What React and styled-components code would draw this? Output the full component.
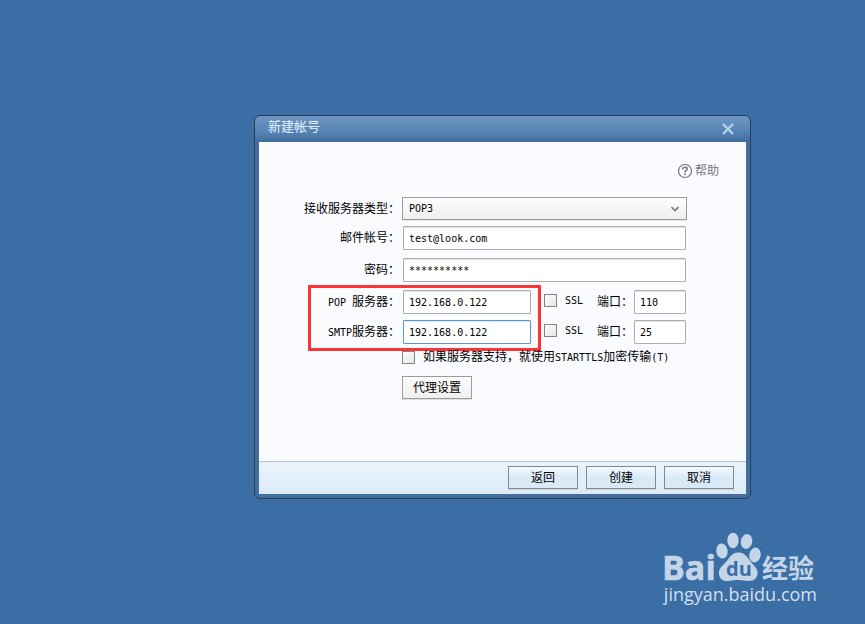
import React, { useState } from 'react';
import styled, { createGlobalStyle } from 'styled-components';

const GlobalStyle = createGlobalStyle`
  * {
    box-sizing: border-box;
  }
  body {
    margin: 0;
    background: #3b6ea5;
    color: #000;
    font-family: "Liberation Sans", "Noto Sans CJK SC", sans-serif;
    font-size: 12px;
  }
  button, input, select {
    margin: 0;
    font-family: inherit;
    font-size: inherit;
    color: inherit;
  }
`;

const Desktop = styled.div`
  min-height: 100vh;
  display: flex;
  flex-direction: column;
  justify-content: space-between;
  padding: 115px 48px 18px 254px;
`;

const Dialog = styled.section`
  margin-right: 66px;
  padding: 0 4px 4px;
  border: 1px solid #263f58;
  border-radius: 6px;
  background: linear-gradient(#7096c3, #5986b4 14px, #426e9e 26px);
`;

const TitleBar = styled.header`
  height: 26px;
  display: flex;
  align-items: center;
  justify-content: space-between;
  padding: 0 10px 0 9px;
`;

const Title = styled.h1`
  margin: 0;
  padding-bottom: 4px;
  color: #e3f1ff;
  font-size: 13px;
  font-weight: 400;
  line-height: 20px;
`;

const CloseButton = styled.button`
  display: flex;
  padding: 2px;
  border: 0;
  background: none;
  color: #b8d0e8;
`;

const Content = styled.div`
  display: flex;
  flex-direction: column;
  min-height: 319px;
  padding-top: 19px;
  background: #f9fbff;
`;

const HelpLink = styled.a`
  align-self: flex-end;
  display: flex;
  align-items: center;
  gap: 2px;
  height: 20px;
  margin: 0 27px 16px 0;
  color: #77797d;
  line-height: 18px;
  text-decoration: none;
`;

const Form = styled.form`
  padding-right: 60px;
`;

const Row = styled.div`
  display: flex;
  align-items: center;
  margin-bottom: ${props => props.$gap || 0}px;
`;

const Label = styled.label`
  flex: none;
  width: ${props => props.$width || 144}px;
  padding-right: ${props => (props.$tight ? 1 : 3)}px;
  line-height: 16px;
  text-align: right;
  white-space: nowrap;
`;

const Latin = styled.span`
  font-family: "DejaVu Sans Mono", monospace;
  font-size: 10px;
  white-space: pre;
`;

const TextInput = styled.input`
  flex: ${props => (props.$width ? 'none' : '1')};
  width: ${props => (props.$width ? `${props.$width}px` : 'auto')};
  min-width: 0;
  height: 24px;
  padding: 1px 6px 0 5px;
  border: 1px solid ${props => (props.$active ? '#5797da' : '#adadad')};
  border-radius: 1px;
  outline: none;
  background: #fff;
  box-shadow: inset 0 1px 0 ${props => (props.$active ? '#dce9f7' : '#e3e5e8')};
  font-family: "DejaVu Sans Mono", monospace;
  font-size: 10px;
`;

const SelectBox = styled.div`
  flex: 1;
  display: grid;
  align-items: center;
  margin: 0 -1px;

  > * {
    grid-area: 1 / 1;
  }

  svg {
    justify-self: end;
    margin-right: 8px;
    pointer-events: none;
  }
`;

const Select = styled.select`
  appearance: none;
  width: 100%;
  height: 23px;
  padding: 0 6px;
  border: 1px solid #9c9c9c;
  border-radius: 0;
  outline: none;
  background: linear-gradient(#fdfdfd, #efefef);
  box-shadow: 0 1px 0 #e4e6eb;
  font-family: "DejaVu Sans Mono", monospace;
  font-size: 10px;
`;

const ServerGroup = styled.div`
  display: flex;
`;

const Highlight = styled.div`
  flex: 1;
  min-width: 0;
  display: flex;
  flex-direction: column;
  gap: 6px;
  margin-left: 49px;
  padding: 2px 7px 4px 0;
  border: 3px solid #fb3537;
`;

const Ports = styled.div`
  flex: none;
  display: flex;
  flex-direction: column;
  gap: 6px;
  padding: 5px 0 0 3px;
`;

const Checkbox = styled.input`
  appearance: none;
  flex: none;
  width: 13px;
  height: 13px;
  border: 1px solid #858585;
  outline: none;
  background: linear-gradient(135deg, #fdfdfd, #e6e6e6);

  &:checked {
    background: #5797da;
  }
`;

const CheckLabel = styled.label`
  display: flex;
  align-items: center;
  gap: 8px;
  line-height: 13px;
  white-space: nowrap;
`;

const PortCheck = styled(CheckLabel)`
  padding-bottom: 3px;
`;

const StartTls = styled.div`
  padding: 0 0 12px 143px;
`;

const Button = styled.button`
  display: block;
  width: 70px;
  height: 23px;
  padding: 0;
  border: 1px solid ${props => (props.$blue ? '#7c8c9d' : '#9c9c9c')};
  background: ${props => (props.$blue ? 'linear-gradient(#f3f9ff, #d9e9f7 55%, #d9eaf7)' : 'linear-gradient(#fcfcfc, #f0f0f0)')};
  box-shadow: 0 1px 0 ${props => (props.$blue ? '#d6d3cc' : '#dedfe3')};
  line-height: 20px;
`;

const ProxyRow = styled.div`
  padding-left: 143px;
`;

const Footer = styled.footer`
  display: flex;
  justify-content: flex-end;
  gap: 8px;
  padding: 4px 12px 5px;
  border-top: 1px solid #b7c4d0;
  background: linear-gradient(#e9f3fb, #dcebf7);
`;

const Watermark = styled.div`
  align-self: flex-end;
  display: flex;
  flex-direction: column;
  color: #c5d5e8;

  svg {
    overflow: visible;
  }
`;

const Site = styled.div`
  font-family: "Open Sans", sans-serif;
  font-size: 18px;
  line-height: 24px;
  text-align: right;
  color: #d3dfed;
`;

function CloseIcon() {
  return (
    <svg width="12" height="12" viewBox="0 0 12 12">
      <path d="M1 1L11 11M11 1L1 11" stroke="currentColor" strokeWidth="2.2" fill="none" />
    </svg>
  );
}

function HelpIcon() {
  return (
    <svg width="15" height="15" viewBox="0 0 15 15" fill="none" stroke="currentColor">
      <circle cx="7" cy="7" r="6.5" strokeWidth="1.2" />
      <path d="M4.700 5.500V5Q4.900 3.200 7 3.200Q9.200 3.200 9.200 4.800Q9.200 5.800 8 6.500Q7 7 7 8.500" strokeWidth="1.6" />
      <path d="M7 9.500V11.100" strokeWidth="1.8" />
    </svg>
  );
}

function Logo() {
  return (
    <svg width="153" height="50" viewBox="0 0 153 50" fill="currentColor">
      <text x="-2" y="48" fontFamily="Open Sans, sans-serif" fontWeight="700" fontSize="34" stroke="currentColor" strokeWidth="0.6">Bai</text>
      <ellipse cx="58" cy="19" rx="5.700" ry="7.500" transform="rotate(-8 58 19)" />
      <ellipse cx="69" cy="8.500" rx="5.700" ry="7.700" />
      <ellipse cx="82.500" cy="9.500" rx="5.700" ry="7.500" transform="rotate(12 82.500 9.500)" />
      <ellipse cx="91" cy="23" rx="5.700" ry="7.500" transform="rotate(12 91 23)" />
      <path d="M74.500 20.500C67 20.500 65 27 61 31C57 35 54.500 37 55 42C55.500 47 59 49.500 64 49C68 48.500 71 48 75 48C79 48 81 49 85 49C90 49 93.500 46 93.500 41C93.500 36 90 34 87 30C83 25 81 20.500 74.500 20.500Z" />
      <text x="62" y="44" fontFamily="Open Sans, sans-serif" fontWeight="700" fontSize="20" fill="#3b6ea5">du</text>
      <text x="98" y="46" fontFamily="Noto Sans CJK SC, sans-serif" fontWeight="700" fontSize="26">经验</text>
    </svg>
  );
}

function PortRow({ id, port }) {
  return (
    <Row>
      <PortCheck>
        <Checkbox type="checkbox" />
        <Latin>SSL</Latin>
      </PortCheck>
      <Label htmlFor={id} $width={51} $tight>端口：</Label>
      <TextInput id={id} $width={52} defaultValue={port} />
    </Row>
  );
}

function App() {
  const [active, setActive] = useState('smtp');

  return (
    <>
      <GlobalStyle />
      <Desktop>
        <Dialog>
          <TitleBar>
            <Title>新建帐号</Title>
            <CloseButton type="button" aria-label="关闭"><CloseIcon /></CloseButton>
          </TitleBar>
          <Content>
            <HelpLink href="#help"><HelpIcon />帮助</HelpLink>
            <Form id="account">
              <Row $gap={6}>
                <Label htmlFor="type">接收服务器类型：</Label>
                <SelectBox>
                  <Select id="type" defaultValue="POP3">
                    <option>POP3</option>
                    <option>IMAP</option>
                  </Select>
                  <svg width="8" height="6" viewBox="0 0 8 6">
                    <path d="M0.500 1L4 4.500L7.500 1" stroke="#777" strokeWidth="1.6" fill="none" />
                  </svg>
                </SelectBox>
              </Row>
              <Row $gap={8}>
                <Label htmlFor="mail">邮件帐号：</Label>
                <TextInput id="mail" defaultValue="test@look.com" />
              </Row>
              <Row $gap={3}>
                <Label htmlFor="password">密码：</Label>
                <TextInput id="password" defaultValue="**********" />
              </Row>
              <ServerGroup>
                <Highlight>
                  <Row>
                    <Label htmlFor="pop" $width={92}><Latin>POP </Latin>服务器：</Label>
                    <TextInput id="pop" defaultValue="192.168.0.122" $active={active === 'pop'} onFocus={() => setActive('pop')} />
                  </Row>
                  <Row>
                    <Label htmlFor="smtp" $width={92}><Latin>SMTP</Latin>服务器：</Label>
                    <TextInput id="smtp" defaultValue="192.168.0.122" $active={active === 'smtp'} onFocus={() => setActive('smtp')} />
                  </Row>
                </Highlight>
                <Ports>
                  <PortRow id="pop-port" port="110" />
                  <PortRow id="smtp-port" port="25" />
                </Ports>
              </ServerGroup>
              <StartTls>
                <CheckLabel>
                  <Checkbox type="checkbox" />
                  <span>如果服务器支持，就使用<Latin>STARTTLS</Latin>加密传输<Latin>(T)</Latin></span>
                </CheckLabel>
              </StartTls>
              <ProxyRow>
                <Button type="button">代理设置</Button>
              </ProxyRow>
            </Form>
          </Content>
          <Footer>
            <Button type="button" $blue>返回</Button>
            <Button type="submit" form="account" $blue>创建</Button>
            <Button type="button" $blue>取消</Button>
          </Footer>
        </Dialog>
        <Watermark>
          <Logo />
          <Site>jingyan.baidu.com</Site>
        </Watermark>
      </Desktop>
    </>
  );
}

export default App;
